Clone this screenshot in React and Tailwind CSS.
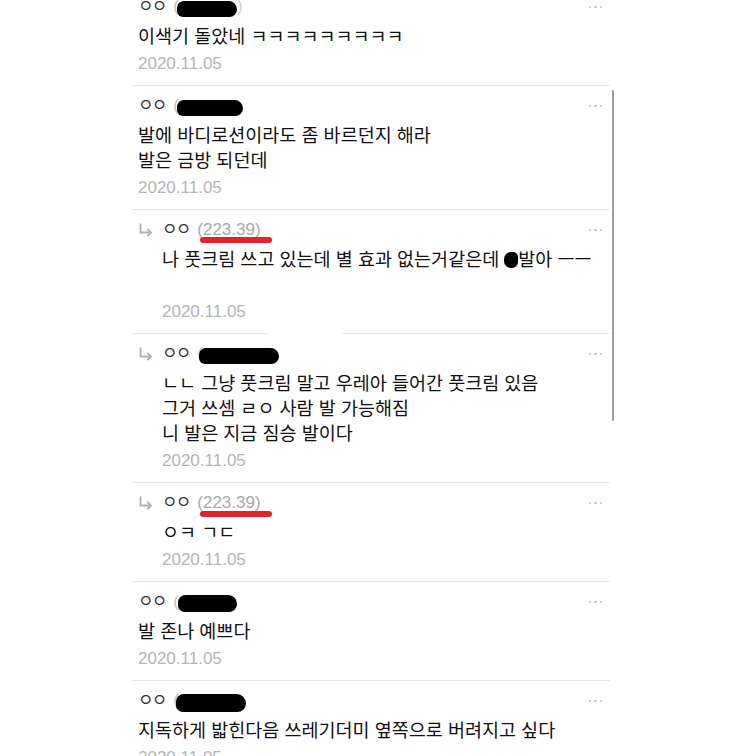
import React from 'react';

const comments = [
  {
    id: 1,
    blob: { w: 60, h: 16, ml: -2 },
    lines: ['이색기 돌았네 ㅋㅋㅋㅋㅋㅋㅋㅋㅋ'],
  },
  {
    id: 2,
    blob: { w: 66, h: 16, ml: -2 },
    lines: ['발에 바디로션이라도 좀 바르던지 해라', '발은 금방 되던데'],
  },
  {
    id: 3,
    reply: true,
    ip: '(223.39)',
    mark: 'top-[20px]',
    lines: ['__CENSORED__', ''],
    split: true,
  },
  {
    id: 4,
    reply: true,
    blob: { w: 80, h: 16, ml: -4 },
    lines: ['ㄴㄴ 그냥 풋크림 말고 우레아 들어간 풋크림 있음', '그거 쓰셈 ㄹㅇ 사람 발 가능해짐', '니 발은 지금 짐승 발이다'],
  },
  {
    id: 5,
    reply: true,
    ip: '(223.39)',
    mark: 'top-[21px]',
    lines: ['ㅇㅋ ㄱㄷ'],
  },
  {
    id: 6,
    blob: { w: 59, h: 17, ml: -1 },
    lines: ['발 존나 예쁘다'],
  },
  {
    id: 7,
    blob: { w: 70, h: 18, ml: -3 },
    lines: ['지독하게 밟힌다음 쓰레기더미 옆쪽으로 버려지고 싶다'],
  },
];

const ReplyArrow = () => (
  <svg width="15" height="14" viewBox="0 0 15 14" className="shrink-0">
    <path d="M2.5 0.5 V9.5 H13" fill="none" stroke="#b0b0b0" strokeWidth="1.8" />
    <path d="M9.5 6 L13 9.5 L9.5 13" fill="none" stroke="#b0b0b0" strokeWidth="1.8" />
  </svg>
);

const MoreDots = () => (
  <div className="flex items-center gap-[3px] mr-[8px]">
    <span className="w-[2.5px] h-[2.5px] rounded-full bg-[#c4c4c4]" />
    <span className="w-[2.5px] h-[2.5px] rounded-full bg-[#c4c4c4]" />
    <span className="w-[2.5px] h-[2.5px] rounded-full bg-[#c4c4c4]" />
  </div>
);

const CommentItem = ({ item, last }) => {
  return (
    <div className="pl-[6px] pt-[10px]">
      <div className="flex">
        {item.reply && (
          <div className="w-[24px] pt-[3px]">
            <ReplyArrow />
          </div>
        )}
        <div className="flex-1">
          {/* Name row */}
          <div className="h-[20px] flex items-center justify-between">
            <div className="flex items-center">
              <span className="text-[17px] text-[#333] tracking-[-2px]">ㅇㅇ</span>
              {item.ip ? (
                <span className="relative ml-[8px] text-[17px] text-[#a8a8a8]">
                  {item.ip}
                  <span className={`absolute left-[3px] ${item.mark} w-[72px] h-[6px] rounded-full bg-[#e3232c]`} />
                </span>
              ) : (
                <>
                  <span className="ml-[8px] text-[17px] text-[#c4c4c4]">(</span>
                  <span
                    className="inline-block bg-black rounded-[9px_11px_10px_8px] mt-[3px]"
                    style={{ width: item.blob.w, height: item.blob.h, marginLeft: item.blob.ml }}
                  />
                  {item.id === 1 && <span className="text-[17px] text-[#d0d0d0]">)</span>}
                </>
              )}
            </div>
            <MoreDots />
          </div>

          {/* Body */}
          <div className="mt-[7px] text-[18.5px] leading-[25px] text-[#111]">
            {item.lines.map((line, i) =>
              line === '__CENSORED__' ? (
                <div key={i} className="h-[25px] whitespace-nowrap">
                  나 풋크림 쓰고 있는데 별 효과 없는거같은데{' '}
                  <span className="inline-block w-[14px] h-[16px] bg-black rounded-[7px_5px_6px_7px] align-[-2px]" />
                  발아 ㅡㅡ
                </div>
              ) : (
                <div key={i} className="h-[25px] whitespace-nowrap">
                  {line}
                </div>
              )
            )}
          </div>

          {/* Date */}
          <div className="mt-[3px] h-[24px] flex items-center text-[17px] text-[#b5b5b5]">2020.11.05</div>
        </div>
      </div>
      <div className="pb-[9px]" />
      {!last &&
        (item.split ? (
          <div className="flex -ml-[6px] h-px">
            <div className="w-[136px] bg-[#e8e8e8]" />
            <div className="w-[74px]" />
            <div className="flex-1 bg-[#e8e8e8]" />
          </div>
        ) : (
          <div className="-ml-[6px] h-px bg-[#e8e8e8]" />
        ))}
    </div>
  );
};

export default function App() {
  return (
    <div
      className="relative w-[756px] h-[756px] overflow-hidden bg-white"
      style={{ fontFamily: '"Liberation Sans", "Noto Sans CJK KR", sans-serif' }}
    >
      <div className="ml-[132px] w-[478px] -mt-[13px]">
        {comments.map((c, i) => (
          <CommentItem key={c.id} item={c} last={i === comments.length - 1} />
        ))}
      </div>

      {/* Scroll indicator */}
      <div className="absolute left-[612px] top-[90px] w-[2px] h-[331px] rounded-full bg-[#9e9e9e]" />
    </div>
  );
}
